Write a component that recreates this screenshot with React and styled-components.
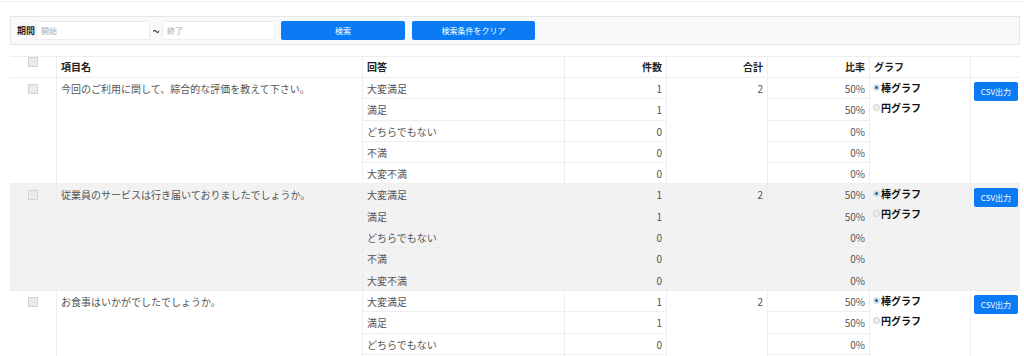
import React from 'react';
import styled, { createGlobalStyle } from 'styled-components';

const GlobalStyle = createGlobalStyle`
  body {
    margin: 0;
    background: #ffffff;
    font-family: "Noto Sans CJK JP", "Noto Sans", sans-serif;
    color: #555555;
  }
`;

const Page = styled.div`
  padding: 0 8px 0 10px;
`;

const TopRule = styled.div`
  margin: 1px -10px 0;
  border-top: 1px solid #eeeeee;
`;

const SearchPanel = styled.div`
  display: flex;
  align-items: center;
  height: 29px;
  margin-top: 14px;
  margin-right: -4px;
  padding: 0 6px;
  background: #f8f9fa;
  border: 1px solid #e6e6e6;
  box-sizing: border-box;
`;

const PeriodLabel = styled.span`
  width: 18px;
  font-size: 9px;
  font-weight: bold;
  color: #222222;
  margin-right: 1px;
  white-space: nowrap;
`;

const DateInput = styled.input`
  width: ${props => props.width}px;
  height: 19px;
  box-sizing: border-box;
  border: 1px solid #eeeeee;
  background: #ffffff;
  padding: 0 4px;
  font-family: inherit;
  font-size: 8px;
  color: #555;
  outline: none;

  &::placeholder {
    color: #aaaaaa;
  }
`;

const Tilde = styled.span`
  width: 12px;
  text-align: center;
  font-size: 13px;
  color: #222;
  line-height: 1;
`;

const SearchButton = styled.button`
  width: ${props => props.width}px;
  height: 19px;
  margin-left: ${props => props.gap}px;
  border: none;
  border-radius: 2px;
  background: #0a7bf3;
  color: #ffffff;
  font-family: inherit;
  font-size: 8px;
  padding: 0;
`;

const Table = styled.table`
  margin-top: 11px;
  width: 1010px;
  border-collapse: separate;
  border-spacing: 0;
  table-layout: fixed;
  font-size: 10px;
  border-top: 1px solid #eeeeee;
`;

const Th = styled.th`
  height: 20px;
  padding: 0 4px;
  font-weight: bold;
  color: #222222;
  text-align: ${props => props.align || 'left'};
  border-bottom: 1px solid #eeeeee;
  border-left: ${props => (props.first ? 'none' : '1px solid #eeeeee')};
  line-height: 20px;
`;

const Td = styled.td`
  padding: 5px 4px 4.3px;
  line-height: 11px;
  vertical-align: top;
  text-align: ${props => props.align || 'left'};
  background: ${props => (props.shade ? '#f2f2f2' : '#ffffff')};
  border-bottom: 1px solid #eeeeee;
  border-left: ${props => (props.first ? 'none' : '1px solid #eeeeee')};
  color: #555555;
`;

const CheckCell = styled(Td)`
  text-align: center;
  padding-top: 6px;
`;

const Check = styled.span`
  display: inline-block;
  width: 8px;
  height: 8px;
  border: 1px solid #d4d4d4;
  background: #ebebeb;
  vertical-align: top;
`;

const GraphOptions = styled.div`
  display: flex;
  flex-direction: column;
  gap: 9px;
  margin-top: -1px;
  margin-left: -1px;
`;

const GraphOption = styled.label`
  display: flex;
  align-items: center;
  gap: 1px;
  font-weight: bold;
  color: #111111;
  font-size: 10px;
  line-height: 11px;
`;

const Radio = styled.span`
  display: inline-block;
  width: 7px;
  height: 7px;
  border-radius: 50%;
  box-sizing: border-box;
  border: ${props => (props.checked ? '2px solid #cfe0ee' : '1px solid #cccccc')};
  background: ${props => (props.checked ? '#2d5f8c' : '#eeeeee')};
`;

const CsvButton = styled.button`
  width: 44px;
  height: 19px;
  margin: -1px 0 0 -1px;
  border: none;
  border-radius: 2px;
  background: #0a7bf3;
  color: #ffffff;
  font-family: inherit;
  font-size: 8px;
  padding: 0;
`;

const answers = ['大変満足', '満足', 'どちらでもない', '不満', '大変不満'];

const questions = [
  { id: 1, title: '今回のご利用に関して、綜合的な評価を教えて下さい。', counts: [1, 1, 0, 0, 0] },
  { id: 2, title: '従業員のサービスは行き届いておりましたでしょうか。', counts: [1, 1, 0, 0, 0] },
  { id: 3, title: 'お食事はいかがでしたでしょうか。', counts: [1, 1, 0, 0, 0] },
];

const QuestionRows = ({ question, shade }) => {
  const total = question.counts.reduce((a, b) => a + b, 0);
  return answers.map((answer, i) => {
    const count = question.counts[i];
    const ratio = total ? Math.round((count / total) * 100) : 0;
    return (
      <tr key={answer}>
        {i === 0 && (
          <>
            <CheckCell first shade={shade} rowSpan={5}>
              <Check />
            </CheckCell>
            <Td shade={shade} rowSpan={5}>{question.title}</Td>
          </>
        )}
        <Td shade={shade}>{answer}</Td>
        <Td shade={shade} align="right">{count}</Td>
        {i === 0 && (
          <Td shade={shade} align="right" rowSpan={5}>{total}</Td>
        )}
        <Td shade={shade} align="right">{ratio}%</Td>
        {i === 0 && (
          <>
            <Td shade={shade} rowSpan={5}>
              <GraphOptions>
                <GraphOption><Radio checked />棒グラフ</GraphOption>
                <GraphOption><Radio />円グラフ</GraphOption>
              </GraphOptions>
            </Td>
            <Td shade={shade} rowSpan={5}>
              <CsvButton>CSV出力</CsvButton>
            </Td>
          </>
        )}
      </tr>
    );
  });
};

const App = () => (
  <>
    <GlobalStyle />
    <TopRule />
    <Page>
      <SearchPanel>
        <PeriodLabel>期間</PeriodLabel>
        <DateInput width={114} placeholder="開始" />
        <Tilde>~</Tilde>
        <DateInput width={113} placeholder="終了" />
        <SearchButton width={124} gap={6}>検索</SearchButton>
        <SearchButton width={123} gap={7}>検索条件をクリア</SearchButton>
      </SearchPanel>
      <Table>
        <colgroup>
          <col style={{ width: 46 }} />
          <col style={{ width: 306 }} />
          <col style={{ width: 202 }} />
          <col style={{ width: 102 }} />
          <col style={{ width: 101 }} />
          <col style={{ width: 102 }} />
          <col style={{ width: 101 }} />
          <col style={{ width: 50 }} />
        </colgroup>
        <thead>
          <tr>
            <Th first style={{ textAlign: 'center' }}><Check /></Th>
            <Th>項目名</Th>
            <Th>回答</Th>
            <Th align="right">件数</Th>
            <Th align="right">合計</Th>
            <Th align="right">比率</Th>
            <Th>グラフ</Th>
            <Th />
          </tr>
        </thead>
        <tbody>
          {questions.map((q, idx) => (
            <QuestionRows key={q.id} question={q} shade={idx === 1} />
          ))}
        </tbody>
      </Table>
    </Page>
  </>
);

export default App;
